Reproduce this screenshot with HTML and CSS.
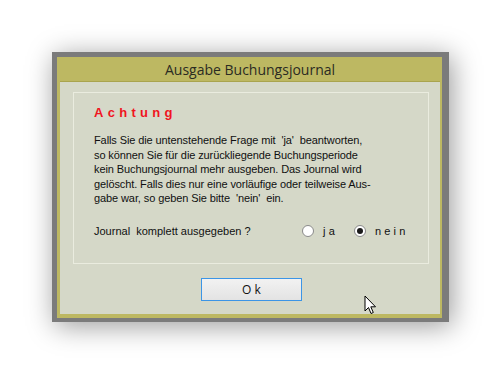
FILE: index.html
```html
<!DOCTYPE html>
<html lang="de">
<head>
  <meta charset="UTF-8" />
  <title>Ausgabe Buchungsjournal</title>
  <link rel="stylesheet" href="styles.css">
</head>
<body>
  <div class="dialog">
    <div class="title-bar">Ausgabe Buchungsjournal</div>
    <div class="dialog-body">
      <div class="group">
        <h1 class="warning">Achtung</h1>
        <p class="message">
          Falls Sie die untenstehende Frage mit &nbsp;'ja'&nbsp; beantworten,<br>
          so können Sie für die zurückliegende Buchungsperiode<br>
          kein Buchungsjournal mehr ausgeben. Das Journal wird<br>
          gelöscht. Falls dies nur eine vorläufige oder teilweise Aus-<br>
          gabe war, so geben Sie bitte &nbsp;'nein'&nbsp; ein.
        </p>
        <div class="question">
          <span class="question-text">Journal&nbsp; komplett ausgegeben ?</span>
          <label class="option"><input type="radio" name="done" value="ja"><span>ja</span></label>
          <label class="option"><input type="radio" name="done" value="nein" checked><span>nein</span></label>
        </div>
      </div>
      <div class="actions">
        <button type="button" class="ok-button">O k</button>
      </div>
    </div>
  </div>

  <svg class="cursor" width="13" height="21" viewBox="0 0 13 21">
    <path d="M1 1 L1 16 L4.5 12.5 L7 18.5 L9.3 17.5 L6.8 11.8 L11.5 11.8 Z" fill="#fff" stroke="#000" stroke-width="1" stroke-linejoin="miter"/>
  </svg>
</body>
</html>
```

FILE: styles.css
```css
body {
  margin: 0;
  background: #fff;
  font-family: Arial, "Liberation Sans", sans-serif;
  position: relative;
  height: 373px;
  overflow: hidden;
}
.dialog {
  margin: 52px 0 0 52px;
  width: 380px;
  border-style: solid;
  border-color: #7b7b7b;
  border-width: 5px 7px 4px 5px;
  background: #bdb862;
  padding: 0 2px 4px 3px;
  box-shadow: 3px 4px 26px rgba(0, 0, 0, 0.4);
}
.title-bar {
  height: 25px;
  line-height: 26px;
  text-align: center;
  font-family: "Open Sans", "Noto Sans", sans-serif;
  font-size: 14px;
  color: #2b2b22;
  border-bottom: 1px solid #a9a44e;
  box-sizing: border-box;
}
.dialog-body {
  background: #d5d8c8;
  height: 232px;
  padding: 10px 11px 0 13px;
  box-sizing: border-box;
}
.group {
  border: 1px solid #eaecdf;
  height: 172px;
  box-sizing: border-box;
  padding: 12px 10px 0 20px;
}
.warning {
  margin: 0;
  font-size: 13px;
  font-weight: bold;
  color: #f0141e;
  letter-spacing: 4.3px;
  line-height: 16px;
}
.message {
  margin: 12px 0 0 0;
  font-size: 11px;
  line-height: 14.6px;
  letter-spacing: -0.1px;
  color: #101010;
}
.question {
  display: flex;
  align-items: center;
  margin-top: 19px;
  font-size: 11px;
  color: #101010;
}
.question-text {
  flex: 0 0 208px;
}
.option {
  display: flex;
  align-items: center;
  flex-shrink: 0;
  margin-right: 16px;
}
.option:last-child {
  margin-right: 0;
}
.option input {
  appearance: none;
  width: 12px;
  height: 12px;
  margin: 0 9px 0 0;
  border: 1px solid #8a8a8a;
  border-radius: 50%;
  background: #fff;
  box-sizing: border-box;
  display: grid;
  place-content: center;
}
.option input:checked::before {
  content: "";
  width: 6px;
  height: 6px;
  border-radius: 50%;
  background: #1a1a1a;
}
.option span {
  letter-spacing: 3.2px;
}
.actions {
  display: flex;
  justify-content: center;
  padding-top: 14px;
}
.ok-button {
  width: 101px;
  height: 23px;
  margin-left: 1px;
  border: 1px solid #3c95e6;
  background: linear-gradient(#f2f2f2, #e3e3e3);
  font-family: "Open Sans", "Noto Sans", sans-serif;
  font-size: 12px;
  color: #111;
  padding: 0;
}
.cursor {
  position: absolute;
  left: 364px;
  top: 295px;
}
```
